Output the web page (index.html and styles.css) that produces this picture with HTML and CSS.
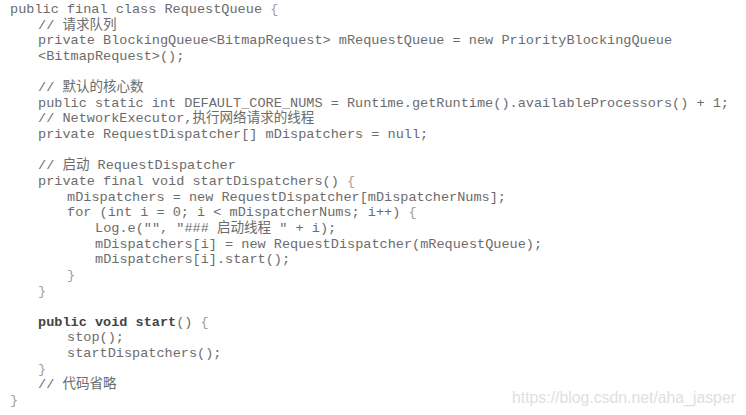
FILE: index.html
```html
<!DOCTYPE html>
<html>
<head>
<meta charset="utf-8">
<link rel="stylesheet" href="styles.css">
</head>
<body>
<div class="page">
  <div class="code">
    <div class="ln">public final class RequestQueue <span class="br">{</span></div>
    <div class="ln i1">// 请求队列</div>
    <div class="ln i1">private BlockingQueue&lt;BitmapRequest&gt; mRequestQueue = new PriorityBlockingQueue</div>
    <div class="ln i1">&lt;BitmapRequest&gt;();</div>
    <div class="ln"> </div>
    <div class="ln i1">// 默认的核心数</div>
    <div class="ln i1">public static int DEFAULT_CORE_NUMS = Runtime.getRuntime().availableProcessors() + 1;</div>
    <div class="ln i1">// NetworkExecutor,执行网络请求的线程</div>
    <div class="ln i1">private RequestDispatcher[] mDispatchers = null;</div>
    <div class="ln"> </div>
    <div class="ln i1">// 启动 RequestDispatcher</div>
    <div class="ln i1">private final void startDispatchers() <span class="br">{</span></div>
    <div class="ln i2">mDispatchers = new RequestDispatcher[mDispatcherNums];</div>
    <div class="ln i2">for (int i = 0; i &lt; mDispatcherNums; i++) <span class="br">{</span></div>
    <div class="ln i3">Log.e("", "### 启动线程 " + i);</div>
    <div class="ln i3">mDispatchers[i] = new RequestDispatcher(mRequestQueue);</div>
    <div class="ln i3">mDispatchers[i].start();</div>
    <div class="ln i2"><span class="br">}</span></div>
    <div class="ln i1"><span class="br">}</span></div>
    <div class="ln"> </div>
    <div class="ln i1"><b class="kw">public void start</b>() <span class="br">{</span></div>
    <div class="ln i2">stop();</div>
    <div class="ln i2">startDispatchers();</div>
    <div class="ln i1"><span class="br">}</span></div>
    <div class="ln i1">// 代码省略</div>
    <div class="ln"><span class="br">}</span></div>
  </div>
  <div class="wm">https://blog.csdn.net/aha_jasper</div>
</div>
</body>
</html>
```

FILE: styles.css
```css
html, body {
  margin: 0;
  padding: 0;
  background: #ffffff;
}
.page {
  position: relative;
  width: 746px;
  height: 415px;
  overflow: hidden;
}
.code {
  padding: 2px 0 0 10px;
  font-family: "Liberation Mono", "Noto Sans CJK SC", monospace;
  font-size: 13.55px;
  line-height: 15.65px;
  color: #6c6c6c;
}
.ln {
  white-space: pre;
  height: 15.65px;
}
.i1 { margin-left: 28px; }
.i2 { margin-left: 57px; }
.i3 { margin-left: 85px; }
.br { color: #a0a0a0; }
.kw {
  font-weight: bold;
  color: #444444;
}
.wm {
  position: absolute;
  left: 512px;
  top: 389px;
  font-family: "Liberation Sans", Arial, sans-serif;
  font-size: 15.8px;
  color: #e0e0e0;
  white-space: nowrap;
}
```
